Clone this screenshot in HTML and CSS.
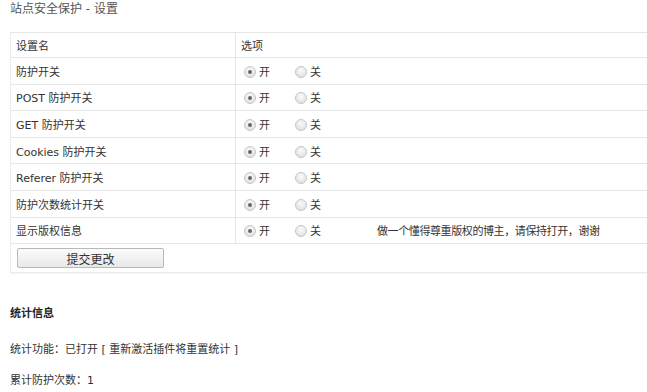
FILE: index.html
```html
<!DOCTYPE html>
<html>
<head>
<meta charset="utf-8">
<link rel="stylesheet" href="styles.css">
</head>
<body>
<div class="wrap">
  <h2 class="title">站点安全保护 - 设置</h2>
  <table class="opts">
    <tr class="head"><td class="c1">设置名</td><td class="c2">选项</td></tr>
    <tr><td class="c1">防护开关</td><td class="c2"><span class="radio on"></span><span class="lb">开</span><span class="radio"></span><span class="lb">关</span></td></tr>
    <tr><td class="c1">POST 防护开关</td><td class="c2"><span class="radio on"></span><span class="lb">开</span><span class="radio"></span><span class="lb">关</span></td></tr>
    <tr><td class="c1">GET 防护开关</td><td class="c2"><span class="radio on"></span><span class="lb">开</span><span class="radio"></span><span class="lb">关</span></td></tr>
    <tr><td class="c1">Cookies 防护开关</td><td class="c2"><span class="radio on"></span><span class="lb">开</span><span class="radio"></span><span class="lb">关</span></td></tr>
    <tr><td class="c1">Referer 防护开关</td><td class="c2"><span class="radio on"></span><span class="lb">开</span><span class="radio"></span><span class="lb">关</span></td></tr>
    <tr><td class="c1">防护次数统计开关</td><td class="c2"><span class="radio on"></span><span class="lb">开</span><span class="radio"></span><span class="lb">关</span></td></tr>
    <tr><td class="c1">显示版权信息</td><td class="c2"><span class="radio on"></span><span class="lb">开</span><span class="radio"></span><span class="lb">关</span><span class="note">做一个懂得尊重版权的博主，请保持打开，谢谢</span></td></tr>
    <tr class="btnrow"><td class="c1 last" colspan="2"><button class="btn">提交更改</button></td></tr>
  </table>
  <h3 class="sub">统计信息</h3>
  <p class="line">统计功能：已打开 [ 重新激活插件将重置统计 ]</p>
  <p class="line">累计防护次数：1</p>
</div>
</body>
</html>
```

FILE: styles.css
```css
html, body { margin: 0; padding: 0; overflow: hidden; background: #fff; }
body {
  font-family: "DejaVu Sans", "Noto Sans CJK SC", sans-serif;
  font-size: 11px;
  color: #333;
}
.wrap { padding: 0 0 0 10px; }
.title {
  margin: 0;
  padding-top: 2px;
  height: 30px;
  font-size: 12px;
  font-weight: normal;
  color: #555;
  line-height: 15px;
}
.opts {
  border-collapse: collapse;
  width: 660px;
  border: 1px solid #ececec;
  box-shadow: 0 1px 1px rgba(0,0,0,0.04);
}
.opts td {
  border-top: 1px solid #e6e6e6;
  height: 25.6px;
  padding: 0 5px;
  vertical-align: middle;
  white-space: nowrap;
}
.opts .head td { height: 24px; }
.opts .c1 { width: 214px; border-right: 1px solid #e6e6e6; }
.opts .last { border-right: none; height: 28px; padding: 0 5px; }
.radio {
  display: inline-block;
  width: 10px; height: 10px;
  border-radius: 50%;
  border: 1px solid #c8c8c8;
  background: radial-gradient(circle at 50% 35%, #fbfbfb 0%, #e4e4e4 70%, #d6d6d6 100%);
  vertical-align: -2px;
  margin-left: 3px;
  position: relative;
}
.radio.on::after {
  content: "";
  position: absolute;
  left: 3px; top: 3px;
  width: 4px; height: 4px;
  border-radius: 50%;
  background: #666;
}
.lb { margin-left: 3px; margin-right: 22px; font-family: "Noto Sans CJK SC", sans-serif; }
.note { margin-left: 34px; letter-spacing: -0.4px; }
.btn {
  display: block;
  width: 147px; height: 20px;
  font-family: "Noto Sans CJK SC", sans-serif;
  font-size: 12px;
  color: #333;
  border: 1px solid #b8b8b8;
  border-radius: 2px;
  background: linear-gradient(#fcfcfc, #e8e8e8);
  padding: 0;
  margin-left: 1px;
}
.sub {
  margin: 34px 0 0 0;
  font-size: 11px;
  font-weight: bold;
  color: #222;
  line-height: 14px;
}
.line { margin: 22px 0 0 0; line-height: 14px; }
.line + .line { margin-top: 17px; }
```
